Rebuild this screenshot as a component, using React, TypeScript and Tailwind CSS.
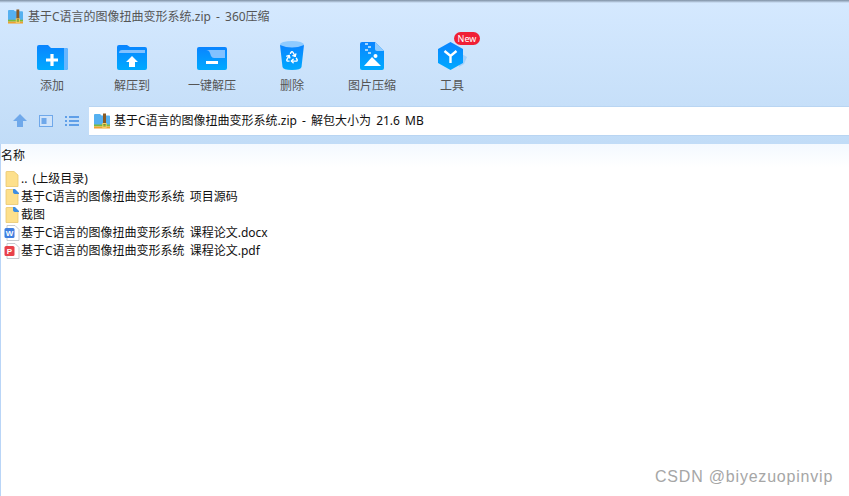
import { Recycle } from "lucide-react";

const font = "font-['Noto_Sans','Noto_Sans_CJK_SC',sans-serif] [word-spacing:2px]";

function ZipIcon({ className }: { className: string }) {
  return (
    <svg viewBox="0 0 16 16" className={className}>
      <path d="M0 2 Q0 1 1 1 H6 L7.500 2.500 H15 Q16 2.500 16 3.500 V12 H0 Z" fill="#55b0f0" />
      <rect x="9" y="0.500" width="3" height="13" fill="#8a5a24" />
      <rect x="0" y="11.500" width="16" height="2" fill="#7dbb3a" />
      <rect x="0" y="13.500" width="16" height="2" fill="#f0a030" />
      <rect x="8.800" y="10.500" width="3.400" height="4" fill="none" stroke="#f5d060" strokeWidth="1" />
    </svg>
  );
}

function AddIcon() {
  return (
    <svg viewBox="0 0 31 25" className="h-[25px] w-[31px]">
      <path d="M0 2 Q0 0 2 0 H11 L14 3 H29 Q31 3 31 5 V23 Q31 25 29 25 H2 Q0 25 0 23 Z" fill="url(#blueFill)" />
      <path d="M27 3 H29 Q31 3 31 5 V23 Q31 25 29 25 H27 Z" fill="#66b6ff" />
      <path d="M9 15 H21 M15 9 V21" stroke="#fff" strokeWidth="3.200" />
    </svg>
  );
}

function ExtractToIcon() {
  return (
    <svg viewBox="0 0 30 25" className="h-[25px] w-[30px]">
      <path d="M0 2 Q0 0 2 0 H10 L13 2 H28 Q30 2 30 4 V23 Q30 25 28 25 H2 Q0 25 0 23 Z" fill="url(#blueFill)" />
      <path d="M2 8 Q2 5 5 5 H28 V8 Z" fill="#82c1ff" />
      <path d="M15 11 L21 17 H18 V22 H12 V17 H9 Z" fill="#fff" />
    </svg>
  );
}

function OneKeyIcon() {
  return (
    <svg viewBox="0 0 30 23" className="h-[23px] w-[30px]">
      <path d="M0 2 Q0 0 2 0 H28 Q30 0 30 2 V21 Q30 23 28 23 H2 Q0 23 0 21 Z" fill="url(#blueFill)" />
      <path d="M9 3 H28 V11 H17 Q15 11 14 9 L13 6 Q12 3 9 3 Z" fill="#82c1ff" />
      <rect x="9" y="14" width="12" height="3" fill="#fff" />
    </svg>
  );
}

function TrashIcon() {
  return (
    <svg viewBox="0 0 24 29" className="h-[29px] w-[24px]">
      <ellipse cx="12" cy="3.500" rx="12" ry="3.500" fill="#8fcbff" />
      <path d="M0 4 Q12 9 24 4 L21.500 26 Q21 29 12 29 Q3 29 2.500 26 Z" fill="url(#blueFill)" />
      <Recycle x={5} y={9} width={14} height={14} color="#fff" strokeWidth={2.400} />
    </svg>
  );
}

function ImageZipIcon() {
  return (
    <svg viewBox="0 0 24 28" className="h-[28px] w-[24px]">
      <path d="M2 0 H15 L24 9 V26 Q24 28 22 28 H2 Q0 28 0 26 V2 Q0 0 2 0 Z" fill="url(#blueFill)" />
      <path d="M15 0 L24 9 H17 Q15 9 15 7 Z" fill="#8fcbff" />
      <path d="M5 1 H8 V3 H5 Z M8 4 H11 V6 H8 Z M5 7 H8 V9 H5 Z M8 10 H11 V12 H8 Z" fill="#9fd3ff" />
      <circle cx="15.500" cy="14" r="2" fill="#fff" />
      <path d="M4 24 L12 15 L21 24 Z" fill="#fff" />
    </svg>
  );
}

function ToolsIcon() {
  return (
    <svg viewBox="0 0 29 28" className="h-[28px] w-[29px]">
      <path d="M22 11 L29 15 L26 22 L21 25 Z" fill="#a5d1fb" />
      <path d="M12.500 0 L25 7 V21 L12.500 28 L0 21 V7 Z" fill="url(#blueFill)" />
      <path d="M6.500 9 L12.500 14 L18.500 9 M12.500 14 V21" stroke="#fff" strokeWidth="2.400" fill="none" />
    </svg>
  );
}

function FolderIcon({ marked }: { marked?: boolean }) {
  return (
    <svg viewBox="0 0 14 16" className="h-[16px] w-[14px]">
      <path d="M1 1 Q1 0.500 1.500 0.500 H9 L13 4 V15.500 H1 Z" fill="#fde08c" stroke="#e8c66e" strokeWidth="0.800" />
      {marked && <path d="M8 0 H10 L14 4 V5 H11 Q8 5 8 3 Z" fill="#3f8ee0" />}
    </svg>
  );
}

function DocIcon({ color, letter }: { color: string; letter: string }) {
  return (
    <svg viewBox="0 0 16 16" className="h-[16px] w-[16px]">
      <path d="M3 0.500 H11 L15 4.500 V15.500 H3 Z" fill="#fff" stroke="#b8bcc4" strokeWidth="0.800" />
      <rect x="0.500" y="3" width="10" height="10" rx="1.500" fill={color} />
      <text x="5.500" y="11" fontSize="8" fontWeight="700" textAnchor="middle" fill="#fff" fontFamily="Liberation Sans">
        {letter}
      </text>
    </svg>
  );
}

function ToolItem({ label, children, badge }: { label: string; children: React.ReactNode; badge?: boolean }) {
  return (
    <div className="relative flex w-[80px] flex-col items-center">
      <div className="flex h-[29px] items-end justify-center">{children}</div>
      <div className="mt-[7px] text-[12px] leading-[18px] text-[#555]">{label}</div>
      {badge && (
        <div className="absolute left-[42px] top-[-9px] h-[13px] w-[26px] rounded-full bg-[#f01f35] text-center text-[9px] leading-[13px] text-white">
          New
        </div>
      )}
    </div>
  );
}

const files = [
  { name: ".. (上级目录)", icon: <FolderIcon /> },
  { name: "基于C语言的图像扭曲变形系统 项目源码", icon: <FolderIcon marked /> },
  { name: "截图", icon: <FolderIcon marked /> },
  { name: "基于C语言的图像扭曲变形系统 课程论文.docx", icon: <DocIcon color="#3f7fe0" letter="W" /> },
  { name: "基于C语言的图像扭曲变形系统 课程论文.pdf", icon: <DocIcon color="#e8414a" letter="P" /> },
];

export default function App() {
  return (
    <div className={`relative h-[496px] w-[849px] overflow-hidden bg-white ${font}`}>
      <svg width="0" height="0" className="absolute">
        <defs>
          <linearGradient id="blueFill" x1="0" y1="0" x2="0" y2="1">
            <stop offset="0" stopColor="#0a84ff" />
            <stop offset="1" stopColor="#00aaff" />
          </linearGradient>
        </defs>
      </svg>

      {/* Header */}
      <div className="h-[144px] bg-gradient-to-b from-[#d5e9ff] to-[#c1dcf7]">
        <div className="h-[3px] bg-gradient-to-b from-[#7f90a4] to-[#d5e9ff]" />
        <div className="flex h-[27px] items-center gap-[5px] pl-[8px]">
          <ZipIcon className="h-[15px] w-[15px]" />
          <span className="text-[12px] text-[#555]">基于C语言的图像扭曲变形系统.zip - 360压缩</span>
        </div>

        <div className="mt-[11px] flex pl-[12px]">
          <ToolItem label="添加"><AddIcon /></ToolItem>
          <ToolItem label="解压到"><ExtractToIcon /></ToolItem>
          <ToolItem label="一键解压"><OneKeyIcon /></ToolItem>
          <ToolItem label="删除"><TrashIcon /></ToolItem>
          <ToolItem label="图片压缩"><ImageZipIcon /></ToolItem>
          <ToolItem label="工具" badge><ToolsIcon /></ToolItem>
        </div>

        <div className="mt-[11px] flex h-[30px] items-center">
          <div className="flex w-[89px] items-center gap-[12px] pl-[13px]">
            <svg viewBox="0 0 14 14" className="h-[14px] w-[14px]">
              <path d="M7 0 L14 7 H10 V13 H4 V7 H0 Z" fill="#6fa8ea" />
            </svg>
            <svg viewBox="0 0 14 12" className="h-[12px] w-[14px]">
              <rect x="0.500" y="0.500" width="13" height="11" fill="#cfe3fa" stroke="#6fa8ea" />
              <rect x="2.500" y="3" width="5" height="6" fill="#6fa8ea" />
            </svg>
            <svg viewBox="0 0 14 10" className="h-[10px] w-[14px]">
              <path d="M0 1 H2 M4 1 H14 M0 5 H2 M4 5 H14 M0 9 H2 M4 9 H14" stroke="#5f9fe8" strokeWidth="1.800" />
            </svg>
          </div>
          <div className="flex h-[30px] flex-1 items-center gap-[4px] border-y border-[#b9d5f2] bg-white pl-[5px]">
            <ZipIcon className="h-[16px] w-[16px]" />
            <span className="text-[12px] text-[#111]">基于C语言的图像扭曲变形系统.zip - 解包大小为 21.6 MB</span>
          </div>
        </div>
      </div>

      {/* File list */}
      <div className="h-[352px] border-l border-[#b9d5f7]">
        <div className="h-[23px] bg-gradient-to-b from-[#f3f9ff] to-white text-[12px] leading-[23px] text-[#111]">
          名称
        </div>
        <div className="pl-[2px] pt-[3px]">
          {files.map((file) => (
            <div key={file.name} className="flex h-[18px] items-center gap-[1px]">
              <div className="flex w-[17px] justify-center">{file.icon}</div>
              <span className="text-[12px] text-[#111]">{file.name}</span>
            </div>
          ))}
        </div>
      </div>

      {/* Watermark */}
      <div className="absolute left-[655px] top-[468px] font-['Liberation_Sans',sans-serif] text-[16px] leading-[18px] tracking-[0.8px] text-[#a6a6a6] [word-spacing:0]">
        CSDN @biyezuopinvip
      </div>
    </div>
  );
}
